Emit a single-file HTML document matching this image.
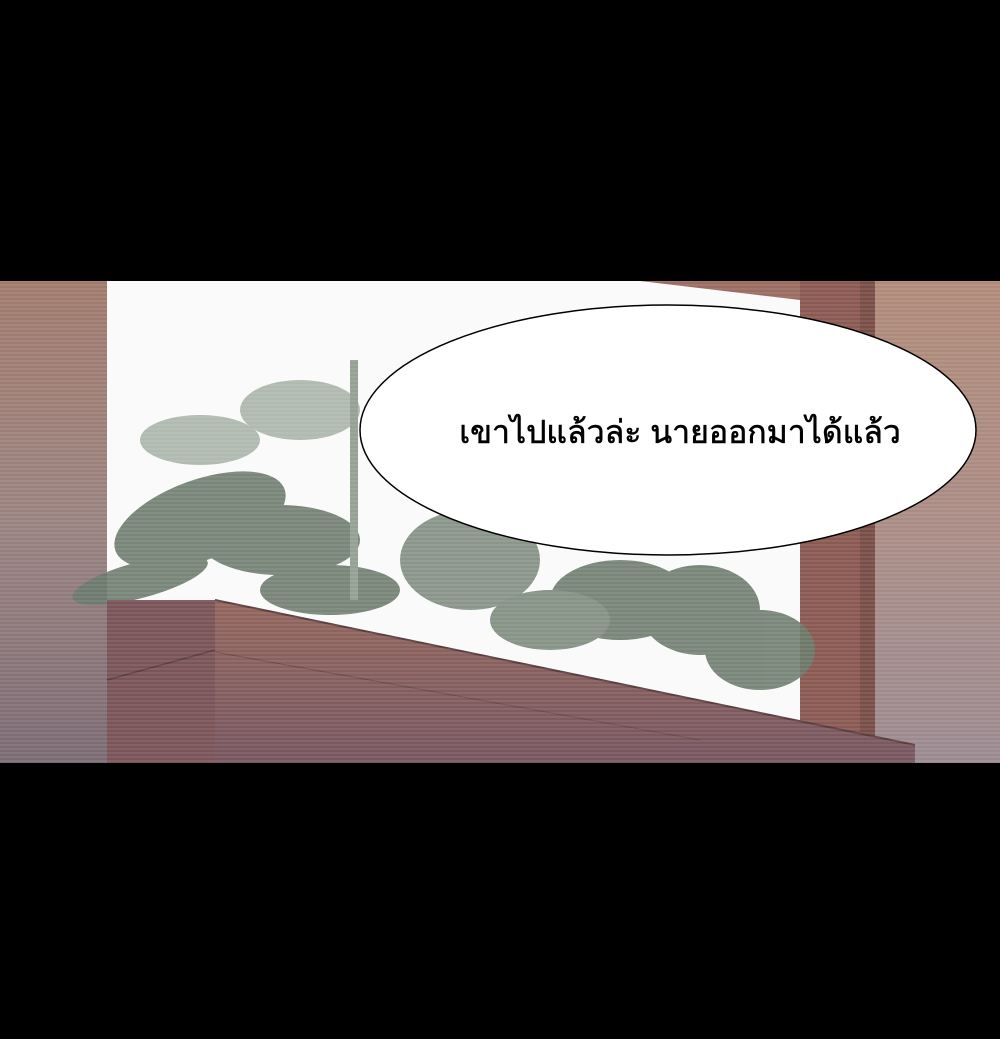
<!DOCTYPE html>
<html><head><meta charset="utf-8"><style>
html,body{margin:0;padding:0;background:#000;width:1000px;height:1039px;overflow:hidden}
svg{display:block}
</style></head><body>
<svg width="1000" height="1039" viewBox="0 0 1000 1039" xmlns="http://www.w3.org/2000/svg">
<defs>
<pattern id="stripes" width="4" height="4" patternUnits="userSpaceOnUse">
<rect width="4" height="2" fill="rgba(255,255,255,0.08)"/>
</pattern>
<linearGradient id="lw" x1="0" y1="0" x2="0" y2="1">
<stop offset="0" stop-color="#a07a6c"/><stop offset="0.5" stop-color="#9a8280"/><stop offset="1" stop-color="#7a6a72"/>
</linearGradient>
<linearGradient id="rw" x1="0" y1="0" x2="0" y2="1">
<stop offset="0" stop-color="#b08a78"/><stop offset="0.6" stop-color="#a88c88"/><stop offset="1" stop-color="#9a8a90"/>
</linearGradient>
<linearGradient id="box" x1="0" y1="0" x2="0" y2="1">
<stop offset="0" stop-color="#93665c"/><stop offset="1" stop-color="#765660"/>
</linearGradient>
</defs>
<rect width="1000" height="1039" fill="#000"/>
<rect x="0" y="281" width="1000" height="482" fill="#fbfafa"/>
<rect x="0" y="281" width="107" height="482" fill="url(#lw)"/>
<rect x="800" y="281" width="75" height="482" fill="#8a5a52"/>
<rect x="860" y="281" width="15" height="482" fill="#7a4e48"/>
<rect x="875" y="281" width="125" height="482" fill="url(#rw)"/>
<polygon points="640,281 800,281 800,300" fill="#9a6c62"/>
<g fill="#6b7a6c" opacity="0.9">
<ellipse cx="200" cy="520" rx="90" ry="40" transform="rotate(-20 200 520)"/>
<ellipse cx="140" cy="580" rx="70" ry="18" transform="rotate(-15 140 580)"/>
<ellipse cx="280" cy="540" rx="80" ry="35"/>
<ellipse cx="330" cy="590" rx="70" ry="25"/>
<ellipse cx="470" cy="560" rx="70" ry="50" fill="#7f8c7f"/>
<ellipse cx="620" cy="600" rx="70" ry="40"/>
<ellipse cx="700" cy="610" rx="60" ry="45"/>
<ellipse cx="760" cy="650" rx="55" ry="40"/>
<ellipse cx="550" cy="620" rx="60" ry="30" fill="#7a887a"/>
<ellipse cx="300" cy="410" rx="60" ry="30" fill="#a8b4a8"/>
<ellipse cx="200" cy="440" rx="60" ry="25" fill="#a8b4a8"/>
<rect x="350" y="360" width="8" height="240" fill="#8a988a"/>
</g>
<polygon points="107,600 215,600 915,745 915,763 107,763" fill="url(#box)"/>
<polygon points="107,600 215,600 215,763 107,763" fill="#7a5458"/>
<line x1="215" y1="600" x2="915" y2="745" stroke="#5a3e40" stroke-width="2"/>
<line x1="107" y1="680" x2="215" y2="650" stroke="#5a3e40" stroke-width="1.5"/>
<line x1="215" y1="652" x2="700" y2="740" stroke="#6a4a4a" stroke-width="1"/>
<rect x="0" y="281" width="1000" height="482" fill="url(#stripes)"/>
<ellipse cx="668" cy="430" rx="308" ry="125" fill="#fff" stroke="#000" stroke-width="1.5"/>
<text x="680" y="443" text-anchor="middle" font-family="'Liberation Sans','DejaVu Sans',sans-serif" font-size="32" fill="#000" stroke="#000" stroke-width="0.6">เขาไปแล้วล่ะ นายออกมาได้แล้ว</text>
</svg>
</body></html>
